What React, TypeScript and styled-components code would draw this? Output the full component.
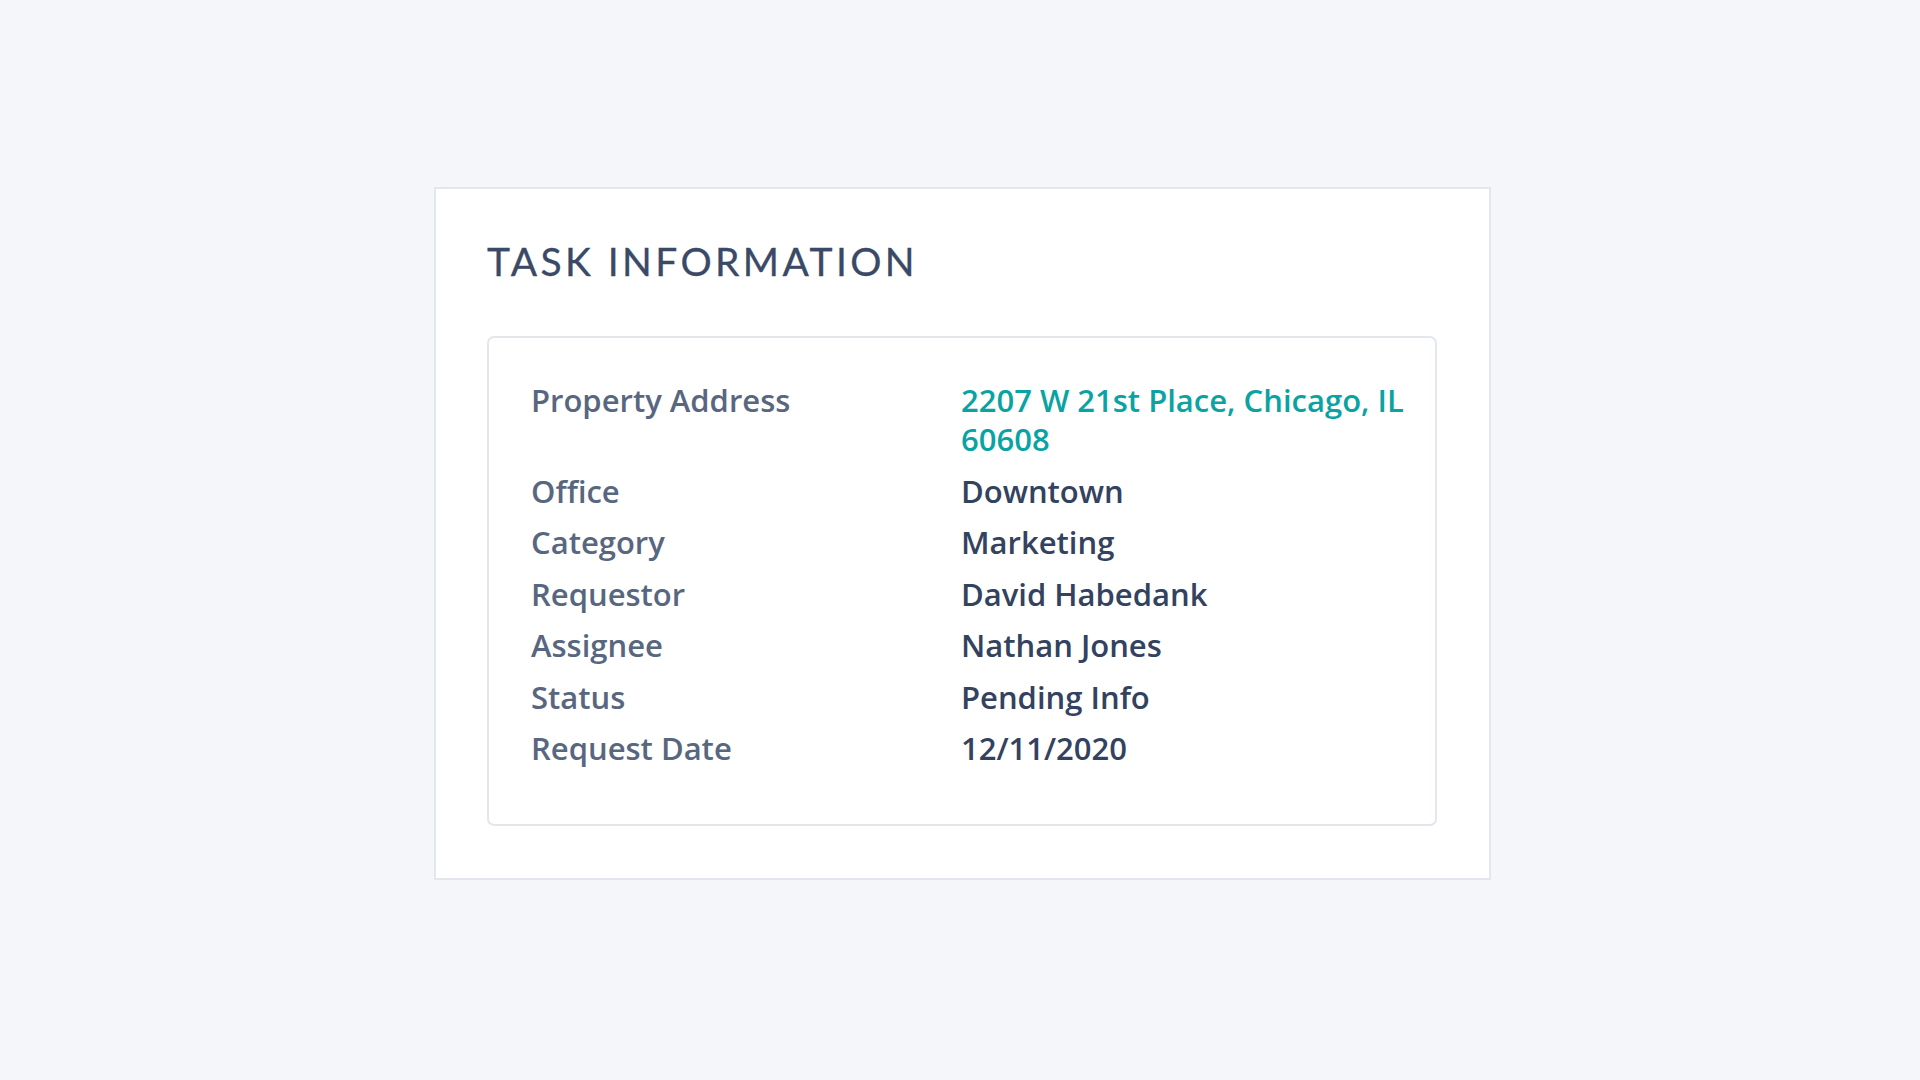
import React from "react";
import styled, { createGlobalStyle } from "styled-components";

const GlobalStyle = createGlobalStyle`
  html, body {
    margin: 0;
    padding: 0;
    background: #f5f6fa;
  }
  body {
    font-family: "Open Sans", "Liberation Sans", sans-serif;
  }
`;

const Page = styled.main`
  min-height: 1080px;
  box-sizing: border-box;
  padding: 187px 0 0 434px;
  display: flex;
  align-items: flex-start;
`;

const Card = styled.section`
  width: 1057px;
  box-sizing: border-box;
  background: #ffffff;
  border: 2px solid #e3e6ec;
  padding: 49px 52px 52px 51px;
  display: flex;
  flex-direction: column;
`;

const Title = styled.h2`
  margin: 0 0 52px 0;
  font-family: "Lato", "Liberation Sans", sans-serif;
  font-weight: 400;
  font-size: 39px;
  line-height: 46px;
  letter-spacing: 3.4px;
  color: #3a4966;
  text-transform: uppercase;
  -webkit-text-stroke: 0.3px #3a4966;
`;

const InfoBox = styled.div`
  border: 2px solid #e3e6ec;
  border-radius: 7px;
  padding: 43px 20px 43px 42px;
  display: flex;
  flex-direction: column;
`;

const Row = styled.div`
  display: grid;
  grid-template-columns: 430px 1fr;
  margin-bottom: 12.5px;
  font-family: "Open Sans", "Liberation Sans", sans-serif;
  font-weight: 600;
  font-size: 31px;
  line-height: 39px;
`;

const Label = styled.div`
  color: #58677f;
`;

const Value = styled.div<{ $link?: boolean }>`
  color: ${(p) => (p.$link ? "#0aa3a3" : "#33425e")};
`;

const rows: { label: string; value: string; link?: boolean }[] = [
  { label: "Property Address", value: "2207 W 21st Place, Chicago, IL 60608", link: true },
  { label: "Office", value: "Downtown" },
  { label: "Category", value: "Marketing" },
  { label: "Requestor", value: "David Habedank" },
  { label: "Assignee", value: "Nathan Jones" },
  { label: "Status", value: "Pending Info" },
  { label: "Request Date", value: "12/11/2020" },
];

export default function App() {
  return (
    <>
      <GlobalStyle />
      <Page>
        <Card>
          <Title>Task Information</Title>
          <InfoBox>
            {rows.map((r) => (
              <Row key={r.label}>
                <Label>{r.label}</Label>
                <Value $link={r.link}>{r.value}</Value>
              </Row>
            ))}
          </InfoBox>
        </Card>
      </Page>
    </>
  );
}
